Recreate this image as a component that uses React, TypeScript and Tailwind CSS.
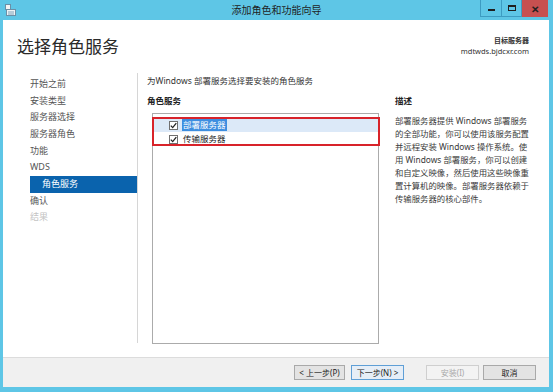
import React from "react";

const steps = [
  { label: "开始之前" },
  { label: "安装类型" },
  { label: "服务器选择" },
  { label: "服务器角色" },
  { label: "功能" },
  { label: "WDS" },
  { label: "角色服务", active: true },
  { label: "确认" },
  { label: "结果", disabled: true },
];

const descLines = [
  "部署服务器提供 Windows 部署服务",
  "的全部功能，你可以使用该服务配置",
  "并远程安装 Windows 操作系统。使",
  "用 Windows 部署服务，你可以创建",
  "和自定义映像，然后使用这些映像重",
  "置计算机的映像。部署服务器依赖于",
  "传输服务器的核心部件。",
];

function Check() {
  return (
    <span className="flex h-[9px] w-[9px] shrink-0 items-center justify-center border border-[#707070] bg-white">
      <svg width="7" height="7" viewBox="0 0 7 7">
        <path d="M0.8 3.6 L2.7 5.6 L6.3 1.2" fill="none" stroke="#222" strokeWidth="1.3" />
      </svg>
    </span>
  );
}

function Btn({ children, kind }: { children: React.ReactNode; kind?: "default" | "disabled" }) {
  const cls =
    kind === "default"
      ? "border-[#5f9fd6] bg-[#e6eef7] text-[#222]"
      : kind === "disabled"
      ? "border-[#cfcfcf] bg-[#f3f3f3] text-[#a8a8a8]"
      : "border-[#a9a9a9] bg-[#e3e3e3] text-[#222]";
  return (
    <div className={`flex h-[15px] w-[53px] items-center justify-center border text-[8px] leading-none ${cls}`}>
      {children}
    </div>
  );
}

export default function App() {
  return (
    <div className="flex h-[392px] w-[553px] flex-col bg-[#5ec6e6] font-['Noto_Sans','Noto_Sans_CJK_SC',sans-serif] text-[#333]">
      {/* title bar */}
      <div className="grid h-[20px] shrink-0 grid-cols-[1fr_auto_1fr] items-center">
        <div className="pl-[5px]">
          <svg width="11" height="12" viewBox="0 0 11 12">
            <rect x="0.5" y="0.5" width="5" height="5" fill="#f4f4f4" stroke="#6b8fa6" />
            <rect x="1.5" y="5.5" width="9" height="6" fill="#eef3f6" stroke="#6b8fa6" />
            <line x1="3" y1="8" x2="9" y2="8" stroke="#7da3bb" />
            <line x1="3" y1="10" x2="9" y2="10" stroke="#7da3bb" />
          </svg>
        </div>
        <div className="text-[10px] leading-none text-[#1e1e1e]">添加角色和功能向导</div>
        <div className="flex self-start justify-end pr-[5px]">
          <div className="flex h-[17px] border border-t-0 border-[#3d9cc2]">
            <div className="flex w-[20px] items-end justify-center pb-[5px]">
              <div className="h-[2px] w-[7px] bg-[#1f1f1f]" />
            </div>
            <div className="flex w-[20px] items-center justify-center border-l border-[#3d9cc2]">
              <div className="h-[6px] w-[8px] border border-t-2 border-[#1f1f1f]" />
            </div>
          </div>
          <div className="flex h-[17px] w-[26px] items-center justify-center bg-[#c75050] text-[10px] font-bold leading-none text-[#222]">
            ✕
          </div>
        </div>
      </div>

      {/* window body */}
      <div className="ml-[3px] mr-[4px] mb-[5px] flex flex-1 flex-col bg-white">
        <div className="flex h-[53px] shrink-0 justify-between">
          <div className="pl-[14px] pt-[16px] text-[17px] leading-[22px] text-[#2a2a2a]">选择角色服务</div>
          <div className="pr-[20px] pt-[16px] text-right leading-[10px]">
            <div className="text-[7px] font-bold text-[#333]">目标服务器</div>
            <div className="text-[7.5px] text-[#333]">mdtwds.bjdcxr.com</div>
          </div>
        </div>

        <div className="flex h-[270px] shrink-0">
          {/* nav */}
          <div className="ml-[27px] w-[108px] border-r border-[#d6d6d6] pt-[3px] text-[9px]">
            {steps.map((s) => (
              <div
                key={s.label}
                className={
                  s.active
                    ? "h-[16.67px] bg-[#0a63ad] pl-[12px] leading-[16.67px] text-white"
                    : s.disabled
                    ? "h-[16.67px] leading-[16.67px] text-[#c4c4c4]"
                    : "h-[16.67px] leading-[16.67px] text-[#555]"
                }
              >
                {s.label}
              </div>
            ))}
          </div>

          {/* main */}
          <div className="ml-[9px] w-[232px]">
            <div className="mt-[2px] text-[8.5px] leading-[12px]">为Windows 部署服务选择要安装的角色服务</div>
            <div className="mt-[8px] text-[8.5px] font-bold leading-[12px] text-[#222]">角色服务</div>
            <div className="relative ml-[5px] mt-[6px] h-[231px] w-[227px] border border-[#ababab] pt-[4px] text-[8.5px]">
              <div className="flex h-[14px] items-center bg-[#dce9f8] pl-[16px]">
                <Check />
                <span className="ml-[4px] bg-[#3d8ee0] px-[1px] leading-[12px] text-white">部署服务器</span>
              </div>
              <div className="flex h-[14px] items-center pl-[16px]">
                <Check />
                <span className="ml-[5px] leading-[12px] text-[#222]">传输服务器</span>
              </div>
              <div className="absolute left-[-1px] top-[3px] h-[29px] w-[228px] border-2 border-[#d8232a]" />
            </div>
          </div>

          {/* description */}
          <div className="ml-[16px] w-[136px]">
            <div className="mt-[22px] text-[8.5px] font-bold leading-[12px] text-[#222]">描述</div>
            <div className="mt-[6.5px] text-[8.4px] leading-[13px] text-[#3a3a3a]">
              {descLines.map((l) => (
                <div key={l} className="whitespace-nowrap">
                  {l}
                </div>
              ))}
            </div>
          </div>
        </div>

        <div className="flex-1" />

        {/* footer */}
        <div className="flex h-[30px] shrink-0 items-center justify-end border-t border-[#dcdcdc] bg-[#f0f0f0] pr-[13px]">
          <div className="flex h-[15px] w-[51px] items-center justify-center border border-[#a9a9a9] bg-[#e3e3e3] text-[8px] leading-none text-[#222]">
            &lt; 上一步(P)
          </div>
          <div className="ml-[6px]">
            <Btn kind="default">下一步(N) &gt;</Btn>
          </div>
          <div className="ml-[22px]">
            <Btn kind="disabled">安装(I)</Btn>
          </div>
          <div className="ml-[4px]">
            <Btn>取消</Btn>
          </div>
        </div>
      </div>
    </div>
  );
}
